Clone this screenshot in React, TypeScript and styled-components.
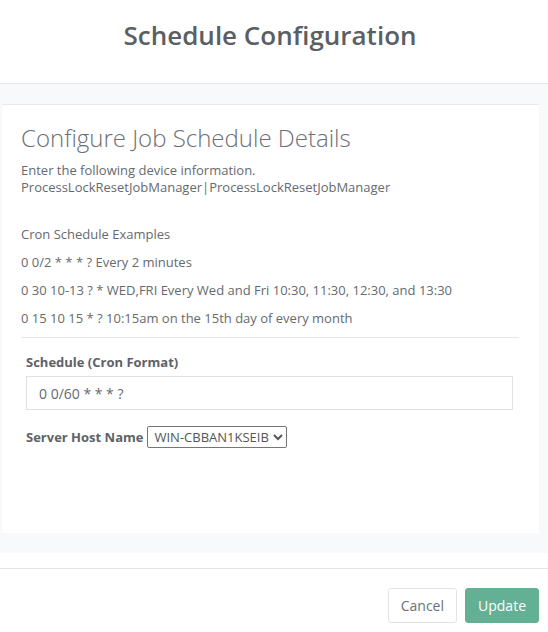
import React, {useState} from 'react';
import styled, {createGlobalStyle} from 'styled-components';

const GlobalStyle = createGlobalStyle`
  html, body {
    margin: 0;
    padding: 0;
    background: #fff;
  }
  body {
    font-family: "Open Sans", "Liberation Sans", sans-serif;
    color: #666a6e;
  }
`;

const examples = [
  '0 0/2 * * * ? Every 2 minutes',
  '0 30 10-13 ? * WED,FRI Every Wed and Fri 10:30, 11:30, 12:30, and 13:30',
  '0 15 10 15 * ? 10:15am on the 15th day of every month',
];

const App = () => {
  const [cron, setCron] = useState('0 0/60 * * * ?');
  const [host, setHost] = useState('WIN-CBBAN1KSEIB');

  return (
    <>
      <GlobalStyle/>
      <Modal>
        <Header>
          <Title>Schedule Configuration</Title>
        </Header>
        <Body>
          <Card>
            <CardTitle>Configure Job Schedule Details</CardTitle>
            <Text>
              Enter the following device information.<br/>
              ProcessLockResetJobManager|ProcessLockResetJobManager
            </Text>
            <Examples>
              <Line>Cron Schedule Examples</Line>
              {examples.map(e => <Line key={e}>{e}</Line>)}
            </Examples>
            <Divider/>
            <FormGroup>
              <Label htmlFor="cron">Schedule (Cron Format)</Label>
              <Input id="cron" value={cron} onChange={e => setCron(e.target.value)}/>
            </FormGroup>
            <InlineGroup>
              <Label htmlFor="host">Server Host Name</Label>
              <Select id="host" value={host} onChange={e => setHost(e.target.value)}>
                <option>WIN-CBBAN1KSEIB</option>
              </Select>
            </InlineGroup>
          </Card>
        </Body>
        <Footer>
          <Button>Cancel</Button>
          <Button primary>Update</Button>
        </Footer>
      </Modal>
    </>
  );
};

export default App;

const Modal = styled.div`
  width: 548px;
  height: 632px;
  display: flex;
  flex-direction: column;
  background: #fff;
`;

const Header = styled.div`
  height: 64px;
  border-bottom: 1px solid #e3e5e7;
  display: flex;
  justify-content: center;
  padding: 19px 8px 0 0;
`;

const Title = styled.h2`
  margin: 0;
  font-size: 26px;
  line-height: 32px;
  font-weight: 600;
  color: #5b5f64;
`;

const Body = styled.div`
  background: #f8f9fb;
  padding: 20px 9px 20px 2px;
`;

const Card = styled.div`
  background: #fff;
  border-top: 1px solid #e6e8ea;
  height: 429px;
  box-sizing: border-box;
  padding: 17px 20px 0 19px;
`;

const CardTitle = styled.h3`
  margin: 0 0 8px;
  font-size: 24px;
  line-height: 32px;
  font-weight: 300;
  color: #6c7075;
`;

const Text = styled.p`
  margin: 0;
  font-size: 13px;
  line-height: 17px;
`;

const Examples = styled.div`
  margin-top: 29px;
`;

const Line = styled.p`
  margin: 0 0 10px;
  font-size: 13px;
  line-height: 18px;
`;

const Divider = styled.hr`
  border: 0;
  border-top: 1px solid #e6e8ea;
  margin: 0;
`;

const FormGroup = styled.div`
  padding: 15px 6px 0 5px;
  display: flex;
  flex-direction: column;
  gap: 5px;
`;

const InlineGroup = styled.div`
  padding: 16px 5px 0;
  display: flex;
  align-items: center;
  gap: 4px;
`;

const Label = styled.label`
  font-size: 13px;
  font-weight: 700;
  color: #5e6266;
`;

const Input = styled.input`
  height: 34px;
  box-sizing: border-box;
  border: 1px solid #dfe2e5;
  padding: 0 12px;
  font-family: "Open Sans", "Liberation Sans", sans-serif;
  font-size: 14px;
  color: #666a6e;
  outline: none;
`;

const Select = styled.select`
  height: 22px;
  padding: 0 1px 0 2px;
  font-family: "Open Sans", "Liberation Sans", sans-serif;
  font-size: 13px;
  color: #555;
  border: 1px solid #767676;
  border-radius: 2px;
  background: #fff;
`;

const Footer = styled.div`
  margin-top: 15px;
  border-top: 1px solid #e3e5e7;
  display: flex;
  justify-content: flex-end;
  gap: 8px;
  padding: 19px 9px 0;
`;

const Button = styled.button<{ primary?: boolean }>`
  height: 35px;
  padding: 0 12px;
  border-radius: 3px;
  font-family: "Open Sans", "Liberation Sans", sans-serif;
  font-size: 14px;
  border: 1px solid ${p => (p.primary ? '#63b095' : '#e1e4e7')};
  background: ${p => (p.primary ? '#63b095' : '#fff')};
  color: ${p => (p.primary ? '#fff' : '#6c7075')};
`;
